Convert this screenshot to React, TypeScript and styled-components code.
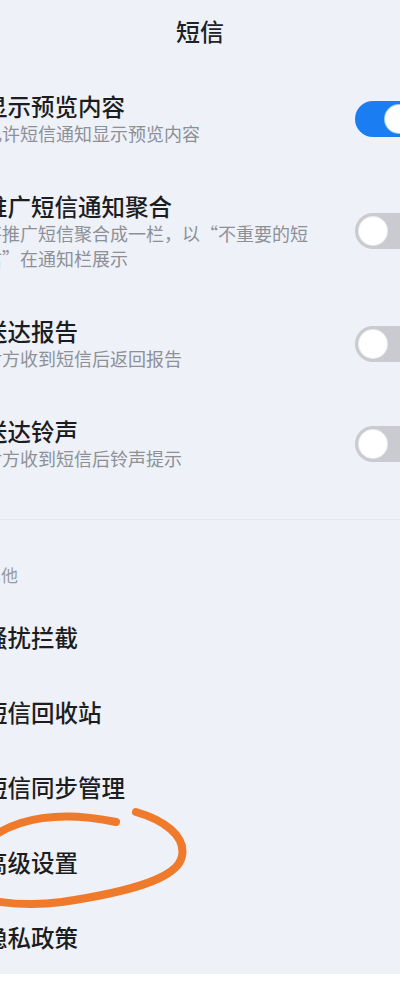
import React from "react";
import styled, { createGlobalStyle } from "styled-components";

const GlobalStyle = createGlobalStyle`
  html, body {
    margin: 0;
    padding: 0;
    background: #ffffff;
  }
  body {
    font-family: "Noto Sans CJK SC", "Noto Sans", sans-serif;
  }
`;

const Screen = styled.div`
  position: relative;
  width: 400px;
  overflow: hidden;
  background: #eef1f8;
`;

const Header = styled.div`
  height: 66px;
  padding-bottom: 6px;
  box-sizing: border-box;
  display: flex;
  align-items: center;
  justify-content: center;
  font-size: 24px;
  font-weight: 500;
  color: #202124;
`;

const List = styled.div`
  margin: 0 -17px 0 -16px;
  display: flex;
  flex-direction: column;
`;

const SwitchRow = styled.div`
  display: flex;
  align-items: center;
  gap: 40px;
  padding: 25px 0 20px;
`;

const TextBlock = styled.div`
  flex: 1;
  display: flex;
  flex-direction: column;
`;

const Title = styled.div`
  font-size: 23.5px;
  line-height: 30px;
  font-weight: 500;
  color: #1d1d1f;
  white-space: nowrap;
`;

const Sub = styled.div`
  font-size: 18px;
  line-height: 25px;
  color: #8d9097;
`;

const Track = styled.div<{ $on?: boolean }>`
  flex: none;
  width: 62px;
  height: 36px;
  border-radius: 18px;
  background: ${(p) => (p.$on ? "#1a7ef2" : "#c9cbd0")};
  display: flex;
  align-items: center;
  justify-content: ${(p) => (p.$on ? "flex-end" : "flex-start")};
  padding: 0 4px;
  box-sizing: border-box;
`;

const Knob = styled.div`
  width: 28px;
  height: 28px;
  border-radius: 50%;
  background: #ffffff;
  box-shadow: 0 0 0 1px rgba(255, 255, 255, 0.6);
`;

const Divider = styled.div`
  height: 1px;
  margin-top: 28px;
  background: #e3e6ed;
`;

const SectionLabel = styled.div`
  padding: 42px 0 12px;
  font-size: 17px;
  line-height: 25px;
  color: #979aa1;
`;

const NavRow = styled.div`
  height: 75px;
  display: flex;
  align-items: center;
`;

const Mark = styled.svg`
  position: absolute;
  left: 0;
  top: 0;
  pointer-events: none;
`;

type SwitchItem = { title: string; sub: string; on: boolean };

const switches: SwitchItem[] = [
  { title: "显示预览内容", sub: "允许短信通知显示预览内容", on: true },
  {
    title: "推广短信通知聚合",
    sub: "将推广短信聚合成一栏，以“不重要的短信”在通知栏展示",
    on: false,
  },
  { title: "送达报告", sub: "对方收到短信后返回报告", on: false },
  { title: "送达铃声", sub: "对方收到短信后铃声提示", on: false },
];

const others = ["骚扰拦截", "短信回收站", "短信同步管理", "高级设置", "隐私政策"];

export default function App() {
  return (
    <Screen>
      <GlobalStyle />
      <Header>短信</Header>
      <List>
        {switches.map((s) => (
          <SwitchRow key={s.title}>
            <TextBlock>
              <Title>{s.title}</Title>
              <Sub>{s.sub}</Sub>
            </TextBlock>
            <Track $on={s.on}>
              <Knob />
            </Track>
          </SwitchRow>
        ))}
      </List>
      <Divider />
      <List>
        <SectionLabel>其他</SectionLabel>
        {others.map((t) => (
          <NavRow key={t}>
            <Title>{t}</Title>
          </NavRow>
        ))}
      </List>
      {/* hand drawn annotation round 高级设置 */}
      <Mark width="400" height="983" viewBox="0 0 400 983">
        <g fill="none" stroke="#f07a2b" strokeWidth="8" strokeLinecap="round">
          <path d="M -6 836 C 18 819, 58 810, 116 822" />
          <path d="M 136 812 C 164 820, 186 836, 182 856 C 178 880, 122 893, 62 902 C 32 906, 12 904, -6 901" />
        </g>
      </Mark>
    </Screen>
  );
}
